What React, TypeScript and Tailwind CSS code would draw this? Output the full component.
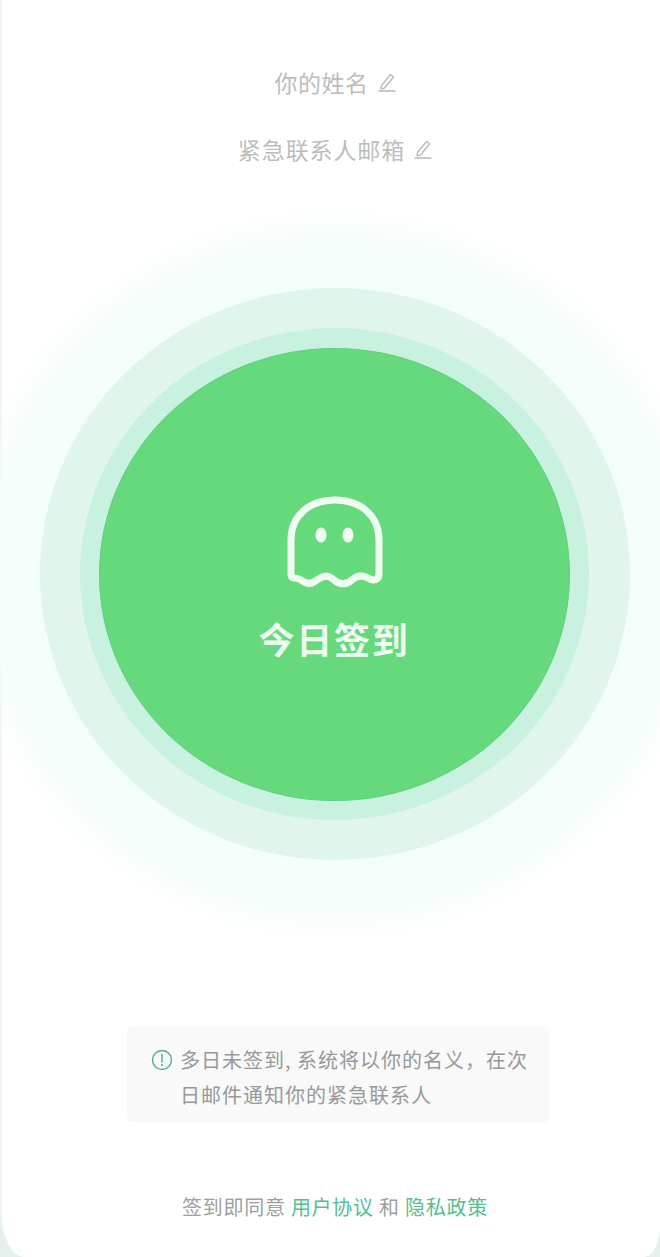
const cjk = "font-['Noto_Sans_CJK_SC','Noto_Sans',sans-serif]";

function Pencil() {
  return (
    <svg width="18" height="20" viewBox="0 0 18 20" fill="none" stroke="#b4b8b7" strokeWidth="1.3" strokeLinejoin="round" strokeLinecap="round" className="shrink-0">
      <path d="M3.5 13.5 L12.5 2.5 L15.5 5 L6.5 16 L3 16.8 Z" />
      <path d="M1 19 H17" />
    </svg>
  );
}

function Ghost() {
  return (
    <svg width="98" height="92" viewBox="0 0 98 92" fill="none" className="ml-[4px]">
      <path
        d="M4 78 V44 C4 20 22 4 48 4 C74 4 92 20 92 44 V78 C92 84 87 85 83 83 C76 79 70 79 65 84 C59 89 53 89 47 84 C42 79 37 79 30 84 C24 89 19 88 14 84 C9 80 4 85 4 78 Z"
        stroke="#effcf1"
        strokeWidth="7"
        strokeLinejoin="round"
      />
      <ellipse cx="34" cy="39" rx="5.5" ry="7.5" fill="#effcf1" />
      <ellipse cx="61" cy="39" rx="5.5" ry="7.5" fill="#effcf1" />
    </svg>
  );
}

export default function App() {
  return (
    <div className={`w-[660px] h-[1257px] overflow-hidden bg-[#e3f0ec] ${cjk}`}>
      <div className="h-full flex flex-col items-center bg-white border-l-2 border-l-[#eff3f1] pl-[8px] rounded-bl-[24px_44px] rounded-br-[16px_32px]">
        <div className="h-[65px] shrink-0" />
        <div className="flex items-center gap-[9px] h-[34px] text-[23px] tracking-[0.5px] text-[#bbbdbc]">
          <span>你的姓名</span>
          <Pencil />
        </div>
        <div className="flex items-center gap-[9px] h-[34px] mt-[33px] text-[23px] tracking-[0.9px] text-[#bbbdbc]">
          <span>紧急联系人邮箱</span>
          <Pencil />
        </div>

        <div className="mt-[122px] shrink-0 w-[590px] h-[572px] rounded-[50%] bg-[#e0f6ec] shadow-[0_0_28px_64px_#f4fdf9] flex items-center justify-center">
          <div className="shrink-0 w-[509px] h-[492px] mr-[2px] rounded-[50%] bg-[#c9f1df] flex items-center justify-center">
            <div className="shrink-0 w-[471px] h-[453px] rounded-[50%] bg-[#66d97c] border border-[#5fcf80] flex flex-col items-center pt-[147px]">
              <Ghost />
              <div className="mt-[26px] text-[36px] leading-[48px] font-bold tracking-[1.7px] text-[#effcf1]">今日签到</div>
            </div>
          </div>
        </div>

        <div className="mt-[166px] ml-[7px] w-[423px] h-[97px] shrink-0 rounded-[6px] bg-[#f9f9fa] flex pl-[24px] pr-[12px] pt-[16px] gap-[7px]">
          <svg width="22" height="22" viewBox="0 0 22 22" fill="none" className="shrink-0 mt-[7px]">
            <circle cx="11" cy="11" r="9.5" stroke="#4fae8c" strokeWidth="1.4" />
            <path d="M11 5.5 V13" stroke="#4fae8c" strokeWidth="1.4" strokeLinecap="round" />
            <circle cx="11" cy="16" r="1" fill="#4fae8c" />
          </svg>
          <p className="text-[20px] leading-[35px] tracking-[1px] text-[#959998] w-[362px]">
            多日未签到, 系统将以你的名义，在次日邮件通知你的紧急联系人
          </p>
        </div>

        <div className="mt-[67px] flex items-center h-[34px] text-[20px] tracking-[0.75px] text-[#9b9f9e] whitespace-pre">
          <span>签到即同意 </span>
          <span className="text-[#55c08f]">用户协议</span>
          <span> 和 </span>
          <span className="text-[#55c08f]">隐私政策</span>
        </div>
      </div>
    </div>
  );
}
